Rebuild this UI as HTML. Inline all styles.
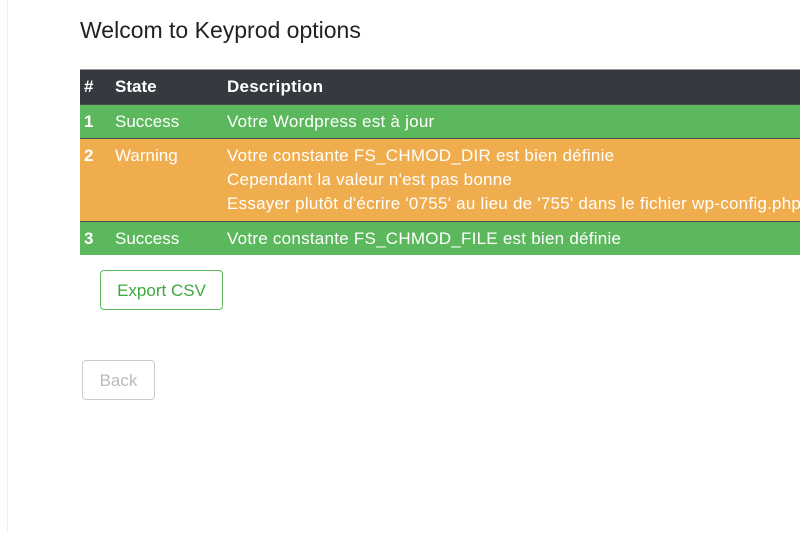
<!DOCTYPE html>
<html><head><style>
body{margin:0;width:800px;height:533px;overflow:hidden;background:#fff;font-family:"Liberation Sans",sans-serif;position:relative}
.edge{position:absolute;left:7px;top:0;bottom:0;border-left:1px solid #eee}
h1{position:absolute;left:80px;top:17px;margin:0;font-weight:normal;font-size:23px;color:#222}
.t{position:absolute;left:80px;top:69px;width:760px;font-size:17px;color:#fff}
.r{position:relative;border-bottom:1px solid #4a4a4a}
.r span{position:absolute;top:7px}
.h{background:#343a40;height:34px;font-weight:bold;border-top:1px solid #999}
.g{background:#5cb85c;height:33px}
.o{background:#f0ad4e;height:82px}
.c1{left:4px}.c2{left:35px}
.r .c3{left:147px;line-height:24px;top:5px;letter-spacing:0.25px}
.b1{position:absolute;left:100px;top:270px;width:121px;height:38px;border:1px solid #5cb85c;border-radius:4px;color:#3da83d;font-size:17px;text-align:center;line-height:40px}
.b2{position:absolute;left:82px;top:360px;width:71px;height:38px;border:1px solid #ccc;border-radius:4px;color:#bbb;font-size:17px;text-align:center;line-height:40px}
</style></head><body>
<div class="edge"></div>
<h1>Welcom to Keyprod options</h1>
<div class="t">
<div class="r h"><span class="c1">#</span><span class="c2">State</span><span class="c3">Description</span></div>
<div class="r g"><span class="c1" style="font-weight:bold">1</span><span class="c2">Success</span><span class="c3">Votre Wordpress est à jour</span></div>
<div class="r o"><span class="c1" style="font-weight:bold">2</span><span class="c2">Warning</span><span class="c3">Votre constante FS_CHMOD_DIR est bien définie<br>Cependant la valeur n'est pas bonne<br>Essayer plutôt d'écrire '0755' au lieu de '755' dans le fichier wp-config.php</span></div>
<div class="r g" style="border:none"><span class="c1" style="font-weight:bold">3</span><span class="c2">Success</span><span class="c3">Votre constante FS_CHMOD_FILE est bien définie</span></div>
</div>
<div class="b1">Export CSV</div>
<div class="b2">Back</div>
</body></html>
